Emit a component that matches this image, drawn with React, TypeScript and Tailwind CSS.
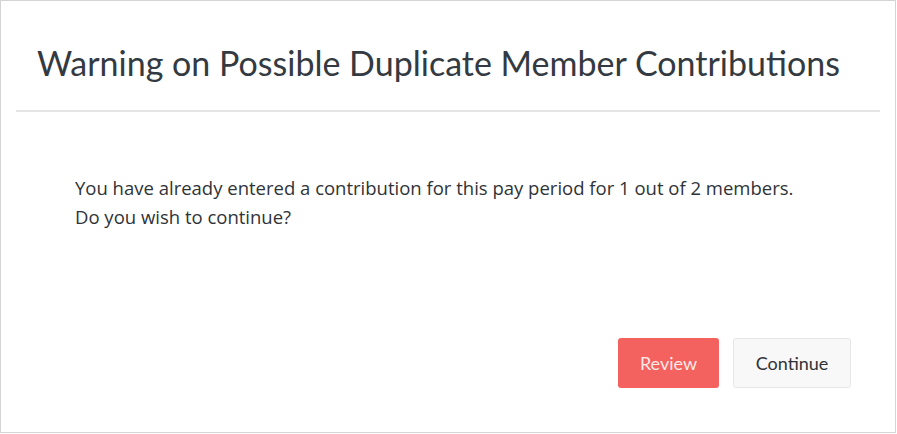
export default function App() {
  return (
    <div
      className="w-[897px] h-[434px] bg-white"
      style={{ fontFamily: "Lato, 'Open Sans', sans-serif" }}
    >
      <div className="w-[896px] h-[433px] border border-[#d4d4d4] flex flex-col">
        <div className="mx-[15px] border-b-2 border-[#e5e5e5] h-[111px] flex items-center pl-[21px] pt-[14px]">
          <h1 className="text-[34px] text-[#333a41] leading-none">
            Warning on Possible Duplicate Member Contributions
          </h1>
        </div>
        <div className="pl-[74px] pt-[61px] text-[18.5px] leading-[29px] text-[#2f3338] font-['Open_Sans',sans-serif]">
          <p>You have already entered a contribution for this pay period for 1 out of 2 members.</p>
          <p>Do you wish to continue?</p>
        </div>
        <div className="flex-1 flex items-end justify-end gap-[14px] pr-[44px] pb-[44px]">
          <button className="w-[101px] h-[50px] rounded-[3px] bg-[#f3625e] text-[#fde9e8] text-[18px]">
            Review
          </button>
          <button className="w-[118px] h-[50px] rounded-[3px] bg-[#f8f8f8] border border-[#e6e6e6] text-[#2f3338] text-[18px]">
            Continue
          </button>
        </div>
      </div>
    </div>
  );
}
